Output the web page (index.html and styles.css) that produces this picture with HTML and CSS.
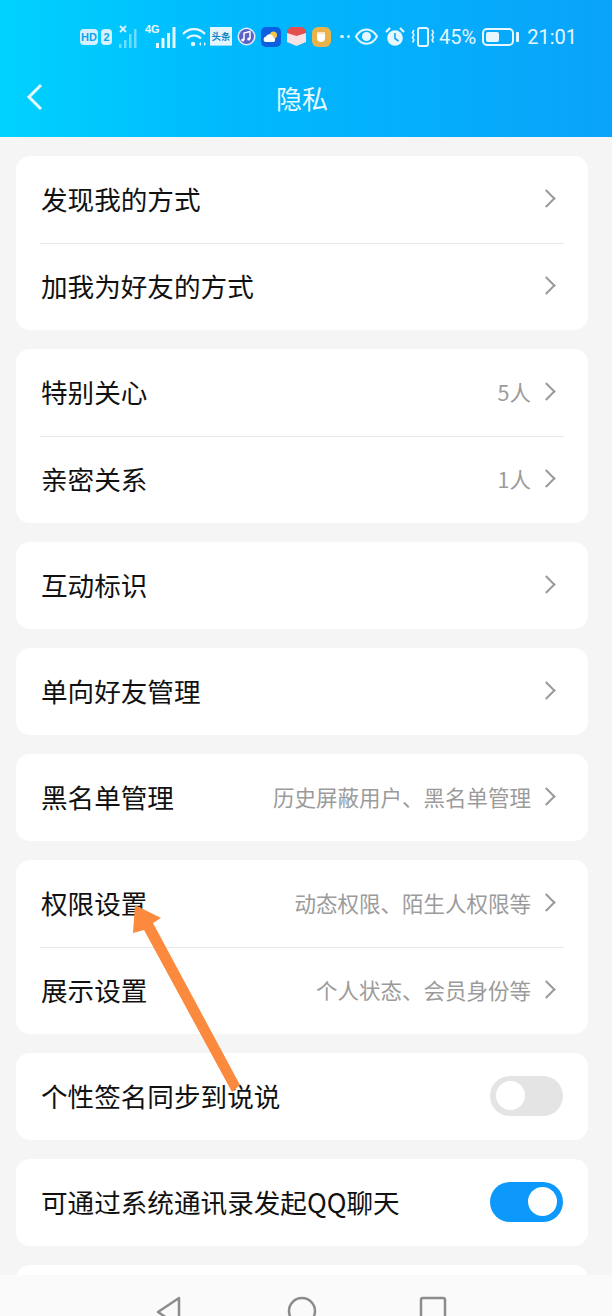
FILE: index.html
```html
<!DOCTYPE html>
<html lang="zh-CN">
<head>
<meta charset="utf-8">
<title>隐私</title>
<link rel="stylesheet" href="styles.css">
</head>
<body>
<div class="app">
  <header class="header">
    <div class="status">
      <div class="status-group">
        <span class="hd">HD</span><span class="hd sim">2</span>
        <svg class="ic sig1" width="21" height="24" viewBox="0 0 21 24"><path d="M1 1l6 6M7 1L1 7" stroke="#d8f2ff" stroke-width="1.8" fill="none"/><g fill="#fff" fill-opacity=".42"><rect x="0" y="19" width="2.500" height="4"/><rect x="5" y="15" width="2.500" height="8"/><rect x="10" y="9" width="2.500" height="14"/><rect x="15" y="4" width="2.500" height="19"/></g></svg>
        <span class="net"><span class="net-t">4G</span><svg width="21" height="24" viewBox="0 0 21 24"><g fill="#e6f7ff"><rect x="0" y="18" width="3" height="5"/><rect x="5.500" y="13" width="3" height="10"/><rect x="11" y="8" width="3" height="15"/><rect x="16.500" y="2" width="3" height="21"/></g></svg></span>
        <svg class="ic" width="24" height="20" viewBox="0 0 24 20"><g fill="none" stroke="#e6f7ff" stroke-width="2.200"><path d="M1 7c6-6.500 16-6.500 22 0"/><path d="M5 11.500c4-4 10-4 14 0"/></g><circle cx="11" cy="17" r="2.200" fill="#e6f7ff"/><path d="M17 17l2-2v4zM24 17l-2-2v4z" fill="#e6f7ff"/></svg>
        <span class="toutiao">头条</span>
        <svg class="ic" width="19" height="19" viewBox="0 0 19 19"><circle cx="9.500" cy="9.500" r="9" fill="#e4ecff"/><circle cx="9.500" cy="9.500" r="7.500" fill="#5a62c4"/><path d="M7 13V6l6-1.500V12" fill="none" stroke="#fff" stroke-width="1.500"/><circle cx="5.800" cy="13" r="1.600" fill="#fff"/><circle cx="11.800" cy="12" r="1.600" fill="#fff"/></svg>
        <svg class="ic" width="20" height="20" viewBox="0 0 20 20"><rect width="20" height="20" rx="5" fill="#0b5fe0"/><circle cx="12.500" cy="8" r="3.500" fill="#f6c644"/><path d="M4 15a3 3 0 0 1 1-5.500 4 4 0 0 1 7.500 1A2.500 2.500 0 0 1 13 15z" fill="#fff"/></svg>
        <svg class="ic" width="21" height="21" viewBox="0 0 21 21"><path d="M1 6l9.500 3L20 6v10l-9.500 4L1 16z" fill="#f7e3e3"/><path d="M1 4l4-3h11l4 3v3l-9.500 3L1 7z" fill="#e4504f"/></svg>
        <svg class="ic" width="19" height="20" viewBox="0 0 19 20"><rect width="19" height="20" rx="6" fill="#e9b24a"/><path d="M5 7h8v4a4 4 0 0 1-8 0z" fill="#fff"/><rect x="5" y="5" width="8" height="2" fill="#fbe6bd"/></svg>
        <span class="dots"><i></i><i></i></span>
      </div>
      <div class="status-group right">
        <svg class="ic" width="23" height="17" viewBox="0 0 23 17"><path d="M1 8.500C6-1 17-1 22 8.500 17 18 6 18 1 8.500z" fill="none" stroke="#e6f7ff" stroke-width="2"/><circle cx="11.500" cy="8.500" r="4.500" fill="#e6f7ff"/></svg>
        <svg class="ic alarm" width="20" height="20" viewBox="0 0 20 20"><circle cx="10" cy="11" r="7.800" fill="#e6f7ff"/><path d="M10 6v5.500l3.500 2.500" fill="none" stroke="#0aa6fb" stroke-width="1.600"/><path d="M1 5l4-4M19 5l-4-4" stroke="#e6f7ff" stroke-width="2.200"/></svg>
        <svg class="ic" width="24" height="20" viewBox="0 0 24 20"><rect x="7" y="1" width="10" height="18" rx="2" fill="none" stroke="#e6f7ff" stroke-width="2"/><path d="M3 3l-1.500 2.500L3 8l-1.500 2.500L3 13l-1.500 2.500M21 3l1.500 2.500L21 8l1.500 2.500L21 13l1.500 2.500" fill="none" stroke="#e6f7ff" stroke-width="1.500"/></svg>
        <span class="pct">45%</span>
        <span class="battery"><span class="battery-fill"></span></span>
        <span class="time">21:01</span>
      </div>
    </div>
    <div class="navbar">
      <svg class="back" width="18" height="28" viewBox="0 0 18 28"><path d="M15 2L3 14l12 12" fill="none" stroke="#e8faff" stroke-width="3"/></svg>
      <h1 class="title">隐私</h1>
    </div>
  </header>

  <main class="list">
    <section class="card">
      <div class="row"><span class="label">发现我的方式</span><span class="chev"></span></div>
      <div class="row"><span class="label">加我为好友的方式</span><span class="chev"></span></div>
    </section>
    <section class="card">
      <div class="row"><span class="label">特别关心</span><span class="value">5人</span><span class="chev"></span></div>
      <div class="row"><span class="label">亲密关系</span><span class="value">1人</span><span class="chev"></span></div>
    </section>
    <section class="card">
      <div class="row"><span class="label">互动标识</span><span class="chev"></span></div>
    </section>
    <section class="card">
      <div class="row"><span class="label">单向好友管理</span><span class="chev"></span></div>
    </section>
    <section class="card">
      <div class="row"><span class="label">黑名单管理</span><span class="value">历史屏蔽用户、黑名单管理</span><span class="chev"></span></div>
    </section>
    <section class="card">
      <div class="row"><span class="label">权限设置</span><span class="value">动态权限、陌生人权限等</span><span class="chev"></span></div>
      <div class="row"><span class="label">展示设置</span><span class="value">个人状态、会员身份等</span><span class="chev"></span></div>
    </section>
    <section class="card">
      <div class="row toggle-row"><span class="label">个性签名同步到说说</span><span class="switch"><span class="knob"></span></span></div>
    </section>
    <section class="card">
      <div class="row toggle-row"><span class="label">可通过系统通讯录发起QQ聊天</span><span class="switch on"><span class="knob"></span></span></div>
    </section>
    <section class="card">
      <div class="row"></div>
    </section>
  </main>

  <nav class="sysnav">
    <svg class="sys-ic" width="26" height="40" viewBox="0 0 26 40"><path d="M23 2L2 16l21 14z" fill="none" stroke="#8c8c8c" stroke-width="2.500" stroke-linejoin="round"/></svg>
    <svg class="sys-ic" width="30" height="40" viewBox="0 0 30 40"><circle cx="15" cy="15" r="13" fill="none" stroke="#8c8c8c" stroke-width="2.500"/></svg>
    <svg class="sys-ic sys-last" width="28" height="40" viewBox="0 0 28 40"><rect x="2" y="2" width="24" height="30" rx="2" fill="none" stroke="#8c8c8c" stroke-width="2.500"/></svg>
  </nav>

  <svg class="arrow" width="612" height="1316" viewBox="0 0 612 1316"><path d="M135 905L161 918 153 923 240 1085 232 1092 144 930 133 933z" fill="#fb8a3e"/></svg>
</div>
</body>
</html>
```
FILE: styles.css
```css
* { box-sizing: border-box; }
html, body { margin: 0; padding: 0; }
body {
  font-family: "Noto Sans CJK SC", "Noto Sans", sans-serif;
  background: #f5f5f5;
}
.app {
  position: relative;
  width: 612px;
  height: 1316px;
  overflow: hidden;
  display: flex;
  flex-direction: column;
}
.header {
  height: 137px;
  flex: none;
  background: linear-gradient(90deg, #00d2ff 0%, #00b8fd 40%, #0aa3fa 100%);
  color: #fff;
}
.status {
  height: 64px;
  padding: 9px 35px 0 80px;
  display: flex;
  justify-content: space-between;
  align-items: center;
}
.status-group { display: flex; align-items: center; gap: 5px; height: 30px; }
.status-group.right { gap: 6px; }
.ic { display: block; flex: none; }
.hd {
  display: flex; align-items: center; justify-content: center;
  height: 16px; width: 18px; border-radius: 4px;
  background: #d5f1ff; color: #0aa6f0;
  font: 700 11px "Liberation Sans", sans-serif;
}
.hd.sim { width: 11px; margin-left: -2px; }
.sig1 { margin-left: 2px; }
.net { position: relative; display: block; width: 32px; height: 24px; flex: none; }
.net svg { position: absolute; right: 0; top: 0; }
.net-t { position: absolute; left: 0; top: -2px; font: 700 11px "Liberation Sans", sans-serif; color: #e6f7ff; }
.toutiao {
  width: 22px; height: 19px; flex: none; margin-left: -1px;
  background: #e3f5ff; color: #0e86c8;
  font-size: 9.500px; font-weight: 700; line-height: 19px;
  text-align: center; white-space: nowrap; overflow: hidden;
  border-bottom: 1px solid #9ad9f5;
}
.dots { display: flex; gap: 3px; margin-left: 4px; align-items: center; }
.dots i { width: 3.500px; height: 3.500px; border-radius: 50%; background: #d8f2ff; display: block; }
.alarm { margin-left: 1px; }
.pct { font: 400 20px Roboto, sans-serif; color: #e6f7ff; margin-left: -2px; }
.battery {
  width: 32px; height: 18px; flex: none; position: relative;
  border: 2px solid #e6f7ff; border-radius: 5px; padding: 2px;
  margin-right: 7px; display: block;
}
.battery::after {
  content: ""; position: absolute; right: -7px; top: 2px;
  width: 3px; height: 10px; background: #e6f7ff; border-radius: 1px;
}
.battery-fill { display: block; width: 13px; height: 10px; background: #e6f7ff; border-radius: 2px; }
.time { font: 400 20px Roboto, sans-serif; color: #e6f7ff; }
.navbar {
  height: 73px;
  position: relative;
  display: flex;
  align-items: center;
  justify-content: center;
  padding: 0 8px 5px 0;
}
.back { position: absolute; left: 26px; top: 19px; }
.title { margin: 0; font-size: 26px; font-weight: 400; color: #e8faff; line-height: 36px; }
.list {
  flex: 1;
  min-height: 0;
  overflow: hidden;
  padding: 19px 24px 0 16px;
  display: flex;
  flex-direction: column;
  gap: 19px;
  background: #f5f5f5;
}
.card { background: #fff; border-radius: 14px; flex: none; width: 572px; }
.row {
  height: 87px;
  margin: 0 24px;
  padding-bottom: 2px;
  display: flex;
  align-items: center;
  position: relative;
}
.card .row + .row { border-top: 1px solid #e8e8e8; padding-bottom: 3px; }
.label { font-size: 26.600px; color: #111; padding-left: 1px; white-space: nowrap; flex: 1; }
.value { font-size: 21.500px; color: #9b9b9b; white-space: nowrap; margin-right: 10px; }
.chev {
  width: 13px; height: 13px; flex: none;
  border-top: 2.200px solid #9a9a9a; border-right: 2.200px solid #9a9a9a;
  transform: rotate(45deg);
  margin-right: 11px; margin-left: -1px;
}
.toggle-row { margin-right: 25px; }
.switch {
  width: 73px; height: 40px; flex: none;
  border-radius: 20px; background: #e4e4e4;
  display: flex; align-items: center; padding: 0 6px;
}
.switch.on { background: #0d99fb; justify-content: flex-end; }
.knob { width: 29px; height: 29px; border-radius: 50%; background: #fff; display: block; }
.sysnav {
  height: 41px; flex: none;
  background: #fafafa;
  padding: 21px 0 0 156px;
  display: flex;
  align-items: flex-start;
  gap: 105px;
  overflow: hidden;
}
.sys-ic { display: block; flex: none; }
.sys-last { margin-left: -3px; }
.arrow { position: absolute; left: 0; top: 0; pointer-events: none; }
```
